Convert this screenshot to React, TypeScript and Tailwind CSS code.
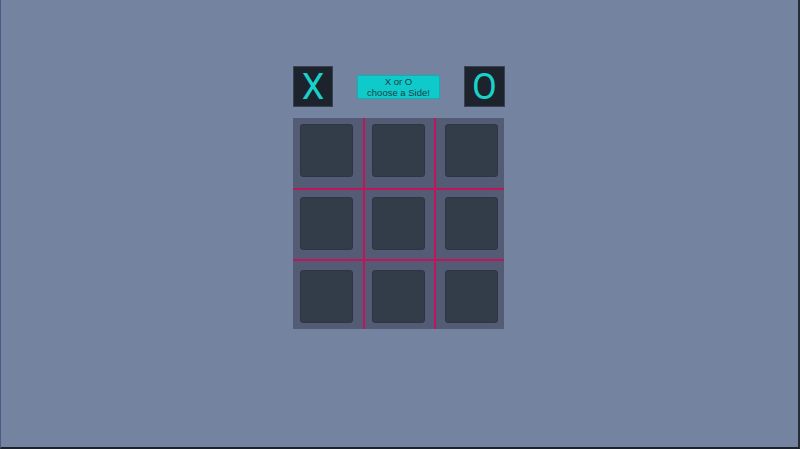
const cells = [0, 1, 2, 3, 4, 5, 6, 7, 8];

const colClass = [
  "border-r-2 border-r-[#c2145c] pl-[7px]",
  "border-r-2 border-r-[#c2145c] pl-[7px]",
  "pl-[9px]",
];
const rowClass = [
  "border-b-2 border-b-[#c2145c] h-[72px] pt-[6px]",
  "border-b-2 border-b-[#c2145c] h-[71px] pt-[7px]",
  "h-[68px] pt-[9px]",
];

function Cell({ i }: { i: number }) {
  const col = i % 3;
  const row = Math.floor(i / 3);
  return (
    <div className={`flex items-start justify-start ${colClass[col]} ${rowClass[row]}`}>
      <div className="size-[53px] rounded-[3px] border border-[#2d3642] bg-[#333d4a]" />
    </div>
  );
}

export default function App() {
  return (
    <div className="h-[449px] w-full overflow-hidden border-l border-b-2 border-r-2 border-l-[#4c5b84] border-r-[#262c38] border-b-[#1d232d] bg-[#74839f] font-['Liberation_Sans',Arial,sans-serif]">
      <div className="flex flex-col items-center pt-[66px]">
        {/* side picker */}
        <div className="ml-[-1px] flex w-[212px] items-center justify-between">
          <button className="flex h-[41px] w-[40px] items-center justify-center border border-[#3a4150] bg-[#1c232d] font-['Roboto',sans-serif] text-[36px] font-normal leading-none text-[#19d1c9]">
            X
          </button>
          <div className="flex h-[24px] w-[83px] flex-col items-center justify-center rounded-[2px] border border-[#0fb0b0] bg-[#0fcaca] text-[9.5px] leading-[11px] text-[#1e3d45]">
            <span>X or O</span>
            <span>choose a Side!</span>
          </div>
          <button className="flex h-[41px] w-[41px] items-center justify-center border border-[#3a4150] bg-[#1c232d] font-['Roboto',sans-serif] text-[36px] font-normal leading-none text-[#19d1c9]">
            O
          </button>
        </div>

        {/* board */}
        <div className="mt-[11px] ml-[-2px] grid w-[211px] grid-cols-[72px_71px_68px] bg-[#535c74]">
          {cells.map((i) => (
            <Cell key={i} i={i} />
          ))}
        </div>
      </div>
    </div>
  );
}
